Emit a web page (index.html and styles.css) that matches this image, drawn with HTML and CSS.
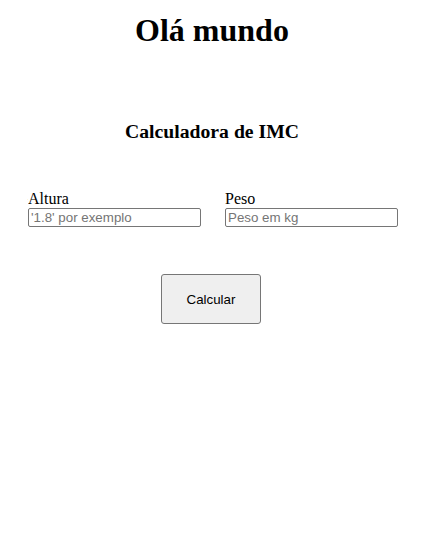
FILE: index.html
```html
<!DOCTYPE html>
<html lang="pt">
<head>
<meta charset="utf-8">
<link rel="stylesheet" href="styles.css">
</head>
<body>
<h1 class="title">Olá mundo</h1>
<h3 class="subtitle">Calculadora de IMC</h3>
<div class="fields">
  <div class="field">
    <label class="label" for="altura">Altura</label>
    <input class="input" id="altura" type="text" placeholder="'1.8' por exemplo">
  </div>
  <div class="field">
    <label class="label" for="peso">Peso</label>
    <input class="input" id="peso" type="text" placeholder="Peso em kg">
  </div>
</div>
<div class="actions">
  <button class="btn" type="button">Calcular</button>
</div>
</body>
</html>
```
FILE: styles.css
```css
body {
  margin: 8px;
  font-family: "Liberation Serif", "Times New Roman", serif;
  color: #000;
  background: #fff;
}
.title {
  margin: 4px 0 0;
  text-align: center;
  font-size: 32px;
  font-weight: bold;
}
.subtitle {
  margin: 71px 0 0;
  text-align: center;
  font-size: 19.7px;
  font-weight: bold;
}
.fields {
  display: flex;
  gap: 24px;
  padding: 0 20px;
  margin-top: 47px;
}
.field {
  display: flex;
  flex-direction: column;
  width: 173px;
}
.label {
  font-size: 16px;
  line-height: 18px;
}
.input {
  box-sizing: border-box;
  width: 173px;
  height: 19px;
  margin: 0;
  padding: 1px 2px;
  border: 1px solid #767676;
  border-radius: 2px;
  font-family: "Liberation Sans", Arial, sans-serif;
  font-size: 13.33px;
}
.input::placeholder {
  color: #757575;
}
.actions {
  display: flex;
  justify-content: center;
  margin-top: 47px;
  padding-right: 2px;
}
.btn {
  width: 100px;
  height: 50px;
  background: #efefef;
  border: 1px solid #767676;
  border-radius: 3px;
  font-family: "Liberation Sans", Arial, sans-serif;
  font-size: 13.33px;
  color: #000;
}
```
